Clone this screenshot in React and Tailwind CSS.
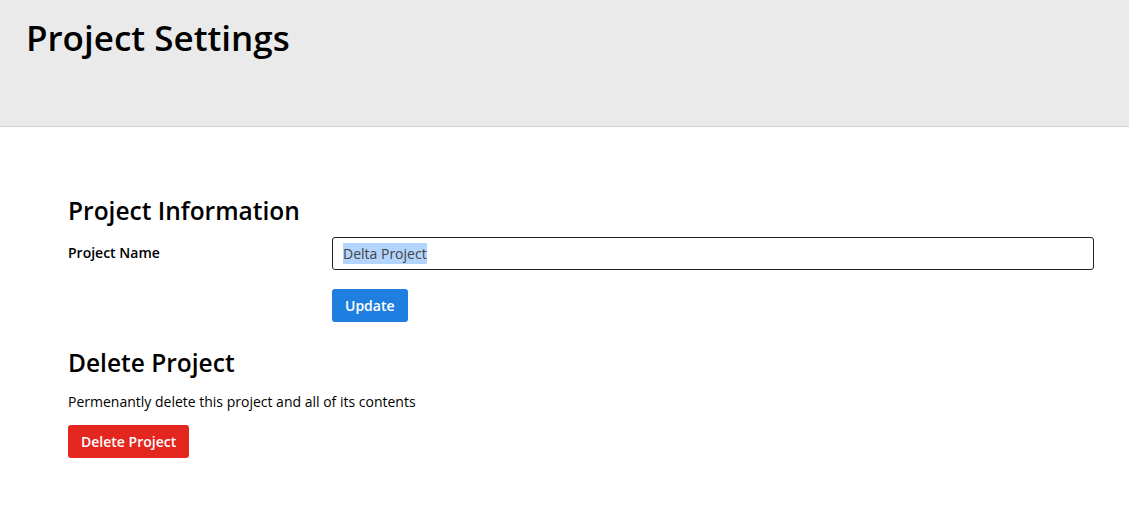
export default function App() {
  return (
    <div className="min-h-[505px] bg-white text-black" style={{ fontFamily: '"Open Sans", "Noto Sans", sans-serif' }}>
      <header className="h-[127px] bg-[#eaeaea] border-b border-[#cfcfcf] px-[26px] pt-[14px]">
        <h1 className="text-[35px] font-semibold leading-[48px]">Project Settings</h1>
      </header>

      <main className="pl-[68px] pr-[35px] pt-[68px]">
        <section>
          <h2 className="text-[24.5px] font-semibold leading-[32px]">Project Information</h2>
          <div className="mt-[10px] flex">
            <label className="w-[264px] shrink-0 pt-[6px] text-[14px] font-semibold leading-[20px]">Project Name</label>
            <div className="flex-1">
              <div className="h-[33px] rounded-[3px] border border-[#222] px-[10px] flex items-center text-[14px] text-[#444]">
                <span className="bg-[#b3d4fc]">Delta Project</span>
              </div>
              <button className="mt-[19px] h-[33px] px-[13px] rounded-[3px] bg-[#1f7fe0] text-white text-[14px] font-semibold">
                Update
              </button>
            </div>
          </div>
        </section>

        <section className="mt-[25px]">
          <h2 className="text-[24.5px] font-semibold leading-[32px]">Delete Project</h2>
          <p className="mt-[13px] text-[14px] leading-[20px]">Permenantly delete this project and all of its contents</p>
          <button className="mt-[13px] h-[33px] px-[13px] rounded-[3px] bg-[#e3261e] text-white text-[14px] font-semibold">
            Delete Project
          </button>
        </section>
      </main>
    </div>
  );
}
